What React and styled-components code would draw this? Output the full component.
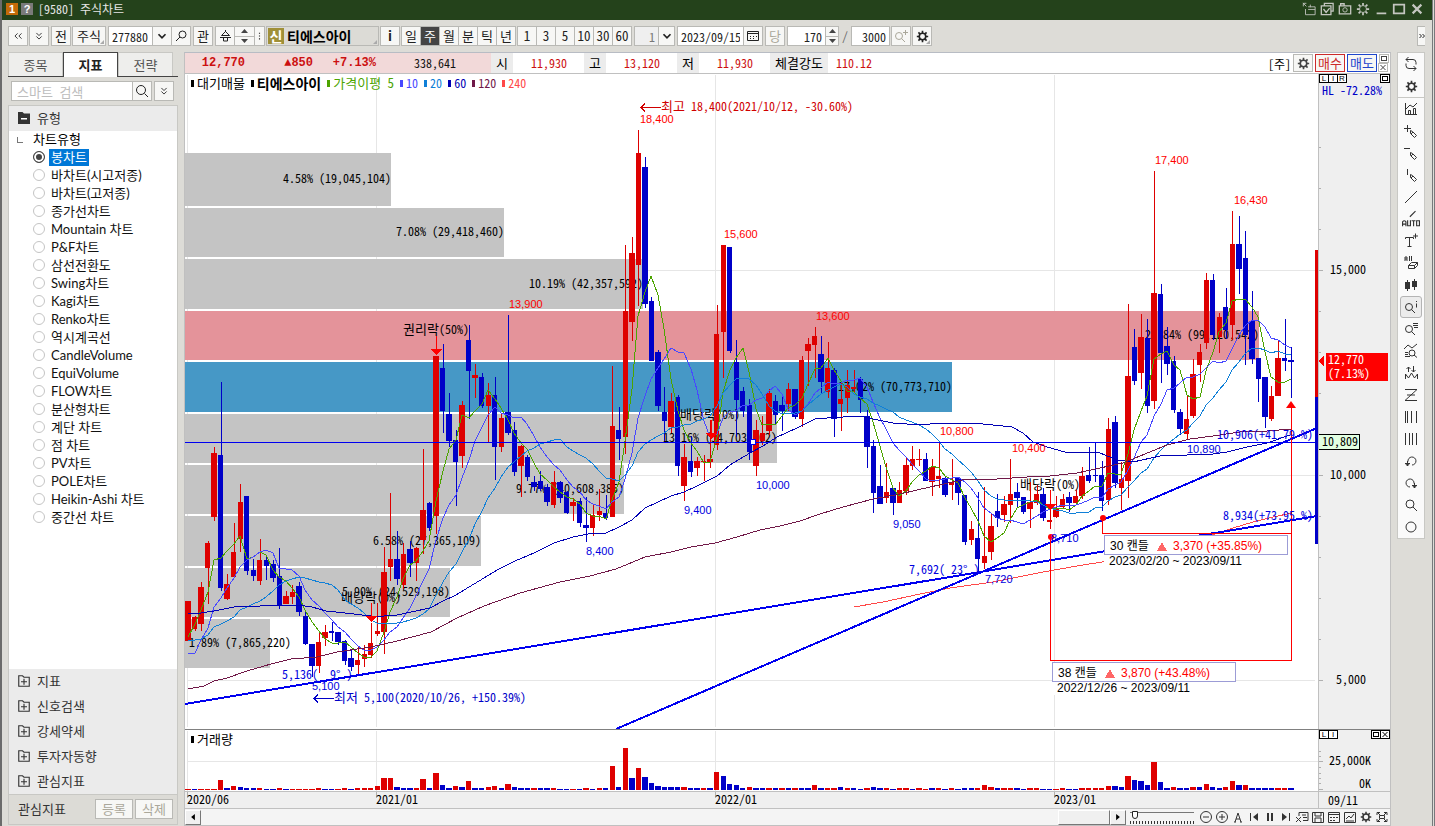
import React from "react";
import styled, { createGlobalStyle } from "styled-components";

const NARROW = '"Noto Sans Mono CJK KR", "Liberation Sans Narrow", "Noto Sans CJK KR", sans-serif';
const UI = '"Liberation Sans", "Noto Sans CJK KR", sans-serif';
const TREE = 'Lato, "Noto Sans CJK KR", sans-serif';

const Global = createGlobalStyle`
  * { box-sizing: border-box; }
  body { margin: 0; background: #dddcd7; font: 12px/16px ${NARROW}; color: #000; }
  button, input, select { font: inherit; color: inherit; margin: 0; }
`;

/* ---------- window frame ---------- */
const Window = styled.div`
  min-height: 100vh;
  display: flex;
  flex-direction: column;
  border-left: 2px solid #6b6b6b;
  border-right: 3px double #77797c;
  overflow: hidden;
`;
const TitleBar = styled.header`
  height: 20px;
  background: #24421b;
  color: #e6e6e6;
  display: flex;
  align-items: center;
  gap: 3px;
  padding: 0 8px 2px 4px;
  flex: none;
`;
const TitleBadge = styled.span`
  width: 12px;
  height: 12px;
  background: ${(p) => p.$bg};
  color: #fff;
  font: bold 11px/12px "Liberation Sans", sans-serif;
  text-align: center;
`;
const TitleText = styled.h1`
  margin: 0 auto 0 2px;
  font: inherit;
  font-size: 12px;
  line-height: 18px;
`;
const TitleIcons = styled.div`
  display: flex;
  gap: 4px;
  color: #c4c6c0;
`;
const PlainButton = styled.button`
  border: 0;
  padding: 0;
  background: none;
  display: grid;
  place-items: center;
  color: inherit;
`;

/* ---------- toolbar ---------- */
const ToolBar = styled.div`
  height: 32px;
  flex: none;
  display: flex;
  align-items: center;
  gap: 2px;
  padding-left: 6px;
  background: #dddcd7;
`;
const Cluster = styled.div`
  display: flex;
  gap: 1px;
`;
const Joined = styled.div`
  display: flex;
  & > * + * { margin-left: -1px; }
`;
const ToolButton = styled.button`
  position: relative;
  width: ${(p) => p.$w || 20}px;
  height: 20px;
  padding: 0;
  display: flex;
  align-items: center;
  justify-content: center;
  white-space: nowrap;
  border: 1px solid #b9b9b5;
  background: ${(p) => (p.$on ? "#444" : "#f7f7f5")};
  color: ${(p) => (p.$on ? "#fff" : p.$dim ? "#aaa79a" : "#222")};
  font-weight: ${(p) => (p.$bold ? 700 : 400)};
  font-size: 13px;
`;
const Corner = styled.i`
  position: absolute;
  right: 1px;
  bottom: 1px;
  border: 2px solid;
  border-color: transparent #aaa #aaa transparent;
`;
const Field = styled.input`
  width: ${(p) => p.$w}px;
  height: 20px;
  padding: 0 3px;
  border: 1px solid #b9b9b5;
  border-radius: 0;
  background: ${(p) => (p.$dim ? "#efefef" : "#fff")};
  color: ${(p) => (p.$dim ? "#777" : "#222")};
  text-align: ${(p) => p.$align || "left"};
  outline: none;
`;
const Slash = styled.span`
  width: 8px;
  text-align: center;
  color: #666;
`;
const NameBox = styled.button`
  position: relative;
  width: 113px;
  height: 20px;
  padding: 0 1px;
  display: flex;
  align-items: center;
  gap: 3px;
  border: 1px solid #b9b9b5;
  background: #dcdbd6;
  font-weight: 700;
  font-size: 14px;
`;
const NewBadge = styled.span`
  width: 16px;
  height: 16px;
  line-height: 16px;
  background: #a09038;
  color: #fff;
`;
const Spin = styled.span`
  width: ${(p) => p.$w}px;
  height: 20px;
  display: flex;
  flex-direction: column;
`;
const SpinButton = styled.button`
  flex: 1;
  padding: 0;
  border: 1px solid #b9b9b5;
  background: #f7f7f5;
  color: #444;
  display: grid;
  place-items: center;
  min-height: 0;
  & + & { border-top: 0; }
`;
const Overflow = styled(ToolButton)`
  margin-left: auto;
  margin-right: 7px;
  border-right: 0;
`;

/* ---------- body ---------- */
const Body = styled.div`
  flex: 1;
  display: flex;
  align-items: stretch;
  padding: 0 7px 2px 6px;
  min-height: 0;
`;
const Sidebar = styled.aside`
  width: 170px;
  flex: none;
  display: flex;
  flex-direction: column;
  margin: 0 6px 1px 0;
`;
const Tabs = styled.div`
  display: flex;
  height: 25px;
  border-bottom: 1px solid #444;
`;
const Tab = styled.button`
  width: 55px;
  height: ${(p) => (p.$on ? 25 : 24)}px;
  padding: 0;
  font-size: 13px;
  font-weight: ${(p) => (p.$on ? 700 : 400)};
  color: ${(p) => (p.$on ? "#222" : "#555")};
  background: ${(p) => (p.$on ? "#fff" : "#eeeeec")};
  border: 1px solid ${(p) => (p.$on ? "#444" : "#c8c8c4")};
  border-bottom: 0;
`;
const SearchRow = styled.form`
  display: flex;
  gap: 2px;
  padding: 4px 3px;
`;
const SearchField = styled(Field)`
  color: #444;
  padding-left: 5px;
  font-size: 13px;
  &::placeholder { color: #bdbdbd; opacity: 1; }
`;
const TreePanel = styled.section`
  flex: 1;
  display: flex;
  flex-direction: column;
  background: #fff;
  border: 1px solid #c8c8c4;
  border-bottom: 0;
`;
const FolderRow = styled.button`
  height: 25px;
  flex: none;
  width: 100%;
  border: 0;
  padding: 0 0 1px 9px;
  display: flex;
  align-items: center;
  gap: 7px;
  background: #ebebeb;
  color: #333;
  font-size: 13px;
`;
const Tree = styled.fieldset`
  margin: 0;
  padding: 0 0 0 24px;
  border: 0;
  flex: 1;
  font: 13px/18px ${TREE};
`;
const TreeTitle = styled.div`
  display: flex;
  height: 17px;
  line-height: 17px;
  gap: 10px;
  margin-left: -16px;
  &::before {
    content: "";
    width: 5px;
    height: 5px;
    margin-top: 6px;
    border: 1px solid #777;
    border-width: 0 0 1px 1px;
  }
`;
const TreeItem = styled.label`
  display: flex;
  align-items: center;
  gap: 4px;
  height: 18px;
`;
const Radio = styled.input`
  appearance: none;
  width: 12px;
  height: 12px;
  border: 1px solid ${(p) => (p.defaultChecked ? "#444" : "#c4c4c4")};
  border-radius: 50%;
  background: #fff;
  box-shadow: inset 0 0 0 2px #fff;
  &:checked { background: #444; }
`;
const TreeText = styled.span`
  padding: 0 2px;
  height: 17px;
  line-height: 17px;
  background: ${(p) => (p.$on ? "#0078d7" : "none")};
  color: ${(p) => (p.$on ? "#fff" : "#111")};
`;
const SideFooter = styled.div`
  height: 31px;
  flex: none;
  display: flex;
  align-items: center;
  gap: 2px;
  padding: 0 4px 2px 9px;
  background: #dcdbd6;
  border: 1px solid #c8c8c4;
  color: #333;
  font-size: 13px;
  & > span { margin-right: auto; }
`;

/* ---------- chart panel ---------- */
const Panel = styled.main`
  flex: 1;
  min-width: 0;
  display: flex;
  flex-direction: column;
  border: 1px solid #c0c0c0;
  border-top-color: #b8bcc4;
  background: #fff;
`;
const QuoteBar = styled.div`
  height: 21px;
  flex: none;
  display: flex;
  align-items: stretch;
  line-height: 20px;
  border-bottom: 1px solid #c0c0c0;
`;
const Quote = styled.div`
  display: flex;
  background: #f2d9d9;
  padding-right: 35px;
`;
const QuoteCell = styled.span`
  width: ${(p) => p.$w}px;
  text-align: right;
  color: ${(p) => (p.$plain ? "#111" : "#cc1010")};
  font-weight: ${(p) => (p.$plain ? 400 : 700)};
  font-family: ${(p) => (p.$plain ? NARROW : `"Liberation Mono", ${NARROW}`)};
`;
const QuoteLabel = styled.span`
  width: ${(p) => p.$w || 22}px;
  text-align: center;
  background: #ececec;
  font-size: 13px;
`;
const QuoteValue = styled.span`
  width: ${(p) => p.$w || 71}px;
  padding-right: 17px;
  text-align: right;
  color: #cc1010;
`;
const QuoteActions = styled.div`
  margin-left: auto;
  display: flex;
  gap: 2px;
  padding: 1px;
`;
const ActionButton = styled.button`
  width: ${(p) => p.$w}px;
  height: 18px;
  padding: 0;
  display: grid;
  place-items: center;
  line-height: 14px;
  font-size: 13px;
  background: #f7f7f5;
  color: ${(p) => p.$c || "#444"};
  border: 1px solid ${(p) => p.$c || "#b9b9b5"};
`;
const TinyStack = styled.div`
  display: flex;
  flex-direction: column;
  color: #444;
`;
const TinyButton = styled.button`
  width: 10px;
  height: 9px;
  padding: 0;
  border: 1px solid ${(p) => (p.$dark ? "#000" : "#b9b9b5")};
  background: #fff;
  display: grid;
  place-items: center;
  font: 8px/7px ${UI};
  & + & { margin-left: ${(p) => (p.$dark ? -1 : 0)}px; }
`;
const PaneRow = styled.section`
  display: flex;
  flex: none;
  border-bottom: 1px solid ${(p) => p.$line || "#808080"};
`;
const Plot = styled.div`
  position: relative;
  flex: 1;
  min-width: 0;
  background: ${(p) => p.$bg || "#fff"};
`;
const Axis = styled.div`
  position: relative;
  width: 72px;
  flex: none;
  border-left: 1px solid #c0c0c0;
  background: #efefef;
`;
const Drawing = styled.svg`
  display: block;
  width: 100%;
  height: auto;
  overflow: ${(p) => (p.$open ? "visible" : "hidden")};
  font: 12px ${NARROW};
`;
const Legend = styled.div`
  position: absolute;
  left: 6px;
  top: 1px;
  display: flex;
  gap: 6px;
`;
const LegendItem = styled.span`
  display: flex;
  align-items: center;
  gap: 3px;
  color: ${(p) => p.$c || "#000"};
  font-weight: ${(p) => (p.$bold ? 700 : 400)};
  font-size: ${(p) => p.$size || 12}px;
  &::before {
    content: "";
    width: 3px;
    height: 7px;
    background: currentColor;
  }
`;
const PaneButtons = styled.div`
  position: absolute;
  top: 0;
  left: ${(p) => (p.$right ? "auto" : 0)};
  right: ${(p) => (p.$right ? 0 : "auto")};
  display: flex;
`;
const BottomBar = styled.div`
  height: 16px;
  flex: none;
  display: flex;
  align-items: center;
  background: #f4f4f4;
`;
const ScrollTrack = styled.div`
  flex: 1;
  display: flex;
  justify-content: space-between;
`;
const ScrollButton = styled.button`
  width: ${(p) => p.$w || 16}px;
  height: 15px;
  padding: 0;
  display: grid;
  place-items: center;
  background: #f0f0f0;
  border: 1px solid;
  border-color: #fff #777 #777 #fff;
`;
const ZoomSlider = styled.input`
  appearance: none;
  width: 64px;
  height: 14px;
  margin: 0 4px;
  background:
    linear-gradient(#777, #777) 0 2px / 100% 1px no-repeat,
    repeating-linear-gradient(90deg, #333 0 1px, transparent 1px 3px) 0 11px / 100% 3px no-repeat;
  &::-webkit-slider-thumb {
    appearance: none;
    width: 6px;
    height: 8px;
    margin-top: -5px;
    border: 1px solid #222;
    border-radius: 0 0 3px 3px;
    background: #fff;
  }
`;
const IconRow = styled.div`
  display: flex;
  color: #333;
  & > button { width: 16px; height: 16px; }
`;
const ToolRail = styled.nav`
  width: 28px;
  flex: none;
  align-self: flex-start;
  margin: 0 0 0 6px;
  display: flex;
  flex-direction: column;
  align-items: center;
  background: #fafafa;
  border: 1px solid #c8c8c4;
  color: #333;
`;
const RailButton = styled.button`
  width: 22px;
  height: 22px;
  padding: 0;
  display: grid;
  place-items: center;
  color: inherit;
  border: 1px solid ${(p) => (p.$on ? "#b4b4b4" : "transparent")};
  border-radius: 3px;
  background: ${(p) => (p.$on ? "#ececec" : "none")};
`;
const RailLine = styled.hr`
  width: 100%;
  margin: 0;
  border: 0;
  border-top: 1px solid #c8c8c4;
`;

/* ---------- icons ---------- */
const Svg = ({ d, fill, size = 16, w = 1, children }) => (
  <svg width={size} height={size} viewBox="0 0 16 16" fill="none" stroke="currentColor" strokeWidth={w} aria-hidden="true">
    {d && <path d={d} />}
    {fill && <path d={fill} fill="currentColor" stroke="none" />}
    {children}
  </svg>
);
const Gear = ({ size = 16, w = 2 }) => (
  <Svg size={size}>
    <circle cx="8" cy="8" r="4" strokeWidth={w} />
    <path strokeWidth="2" d="M8 1v3M8 12v3M1 8h3M12 8h3M3 3l2 2M11 11l2 2M13 3l-2 2M5 11l-2 2" />
  </Svg>
);
const BoxMark = () => (
  <svg width="6" height="5" viewBox="0 0 6 5" fill="none" stroke="currentColor" shapeRendering="crispEdges" aria-hidden="true">
    <path d="M.5.5h5v4h-5z" />
  </svg>
);
const CrossMark = () => (
  <svg width="6" height="5" viewBox="0 0 6 5" fill="none" stroke="currentColor" aria-hidden="true">
    <path d="M.5 0l5 5M5.500 0l-5 5" />
  </svg>
);
const glyph = {
  up: <svg width="7" height="4" aria-hidden="true"><path d="M0 4L3.500 0 7 4z" fill="currentColor" /></svg>,
  down: <svg width="7" height="4" aria-hidden="true"><path d="M0 0l3.500 4L7 0z" fill="currentColor" /></svg>,
  chevron: <Svg size={14} w={2} d="M4 6l4 4 4-4" />,
  left2: <Svg size={14} d="M7.500 5l-3 3 3 3M12 5L9 8l3 3" />,
  right2: <svg width="6" height="6" viewBox="0 0 6 6" fill="none" stroke="currentColor" aria-hidden="true"><path d="M.5 1l2 2-2 2M3.500 1l2 2-2 2" /></svg>,
  down2: <Svg size={14} d="M5 4.500l3 3 3-3M5 8.500l3 3 3-3" />,
  pin: <Svg><circle cx="9.500" cy="6.500" r="3.500" /><path d="M7 9l-4 4" /></Svg>,
  lens: <Svg><circle cx="7" cy="7" r="4.500" /><path d="M10.500 10.500L14 14" /></Svg>,
  lensPlus: <Svg><circle cx="6" cy="8" r="3.500" /><path d="M8.500 10.500L12 14M10 4.500h5M12.500 2v5" /></Svg>,
  merge: <Svg d="M8.500 2v2M8.500 3.500l-4 4h8zM3 9.500h11M6.500 10v3h4v-3" />,
  dots: <Svg fill="M7 2h2v2H7zM7 7h2v2H7zM7 12h2v2H7z" />,
  calendar: <Svg d="M2.500 3.500h11v9h-11zM2.500 5.500h11M5 8.500h1M8 8.500h1M11 8.500h1M5 10.500h1M8 10.500h1" />,
};
const TITLE_ICONS = [
  ["새 창", <Svg size={14} d="M1 1l4 4M1.500 5V1.500H5M4 8v6.500h11v-9H7M7 8.500h8M9.500 3v3" />],
  ["저장", <Svg size={14} d="M5 4V1.500h10v9h-2M1.500 4.500h11v10h-11zM4 8l3 4 4-5" w={1.500} />],
  ["캡처", <Svg size={14}><path d="M1.500 4.500h13v9h-13zM3 4V2h4v2" strokeWidth="1.500" /><circle cx="8" cy="9" r="2.500" /></Svg>],
  ["설정", <Gear size={14} w={1} />],
];
const RAIL = [
  ["새로고침", <Svg d="M5.500 1L3 3.500 5.500 6M3 3.500h7q3 0 3 3v2M10.500 15l2.500-2.500L10.500 10M13 12.500H6q-3 0-3-3v-2" />],
  ["설정", <Gear size={13} w={2} />],
  ["지표", <Svg d="M2.500 2v11.500H14M5.500 13V9.500h2V13M10.500 13V7.500h2V13M3 8l4-4 3 2 4-4" />],
  ["십자선", <Svg d="M1 5.500h7M4.500 2v7M7.500 7.500v3l4 4 2-2-4-4zM8 11l2-2" />],
  ["수평선", <Svg d="M1 3.500h6M7.500 7.500v3l4 4 2-2-4-4zM8 11l2-2" />],
  ["수직선", <Svg d="M4.500 2v6M7.500 7.500v3l4 4 2-2-4-4zM8 11l2-2" />],
  ["추세선", <Svg d="M2 14L14 2" />],
  ["자동추세선", <Svg size={18} d="M7 6l5-5M.5 14.500v-4q1.500-2 3 0v4M.5 12.500h3M5 9v5h2.500V9M8.500 9.500h3.500M10.300 9.500v5M13 9.500h2.500v4.500H13z" />],
  ["문자", <Svg d="M2.500 6V4.500h8V6M6.500 5v8M4.500 13.500h4M10 3h5M12.500.5v5" />],
  ["전체삭제", <Svg d="M2 6V2h2v4M2 4h2M6.500 1v5M8.500 1v5M5.500 10.500h6v3h-6zM5.500 10.500l3-3h6l-3 3M14.500 7.500v3l-3 3" />],
  ["봉", <Svg fill="M2 5h5v7H2zM9 4h5v6H9zM4 3h1v11H4zM11 2h1v11h-1z" />],
  ["정보", <Svg><circle cx="6" cy="8" r="3.500" /><path d="M8.500 10.500L12 14M13.500 4.500v4M13.500 2v1" /></Svg>],
  ["목록", <Svg><circle cx="6" cy="8" r="3.500" /><path d="M8.500 10.500L12 14M10 2.500h5M10 4.500h5M11 6.500h4" /></Svg>],
  ["차트조회", <Svg><circle cx="9" cy="10" r="3" /><path d="M11 12l3 2.500M1 6l4-4 4 3 5-4M2 9.500h3M2 11.500h3M2 13.500h5" /></Svg>],
  ["매매신호", <Svg d="M2.500 14V9l3 4 3-5 3 5 3-4v5M5.500 7V2M3.500 4l2-2 2 2M10.500 1v6M8.500 5l2 2 2-2" />],
  ["지그재그", <Svg d="M2 2.500h12L2 13.500h12M4 8h8" />],
  ["간격선", <Svg d="M2.500 2v12M4.500 2v12M8.500 2v12M13.500 2v12" />],
  ["등분선", <Svg d="M2.500 2v12M6.500 2v12M9.500 2v12M13.500 2v12" />],
  ["되돌리기", <Svg d="M5 8.500a4 4 0 1 1 4 3.500M2 10.500h5M4.500 8v5M2.500 10.500l2 2.500 2-2.500" />],
  ["다시실행", <Svg d="M11 8.500a4 4 0 1 0-4 3.500M9 10.500h5M11.500 8v5M9.500 10.500l2 2.500 2-2.500" />],
  ["확대", <Svg><circle cx="7" cy="7" r="4" /><path d="M10 10l4 4" /></Svg>],
  ["원", <Svg><circle cx="8" cy="8" r="5" /></Svg>],
];
const BOTTOM_ICONS = [
  ["축소", <Svg><circle cx="8" cy="8" r="5.500" /><path d="M5 8h6" /></Svg>],
  ["확대", <Svg><circle cx="8" cy="8" r="5.500" /><path d="M5 8h6M8 5v6" /></Svg>],
  ["자동", <Svg d="M5 13L8 4l3 9M4 13h2M10 13h2M6 10h4" />],
  ["처음", <Svg d="M4.500 4v8" fill="M12 4v8L7 8z" />],
  ["정지", <Svg fill="M5 4h2v8H5zM9 4h2v8H9z" />],
  ["끝", <Svg d="M11.500 4v8" fill="M4 4v8l5-4z" />],
  ["엑셀", <Svg d="M5 7V3.500h9v8H9M8 6h4M9 8.500h4M2 8l5 5M7 8l-5 5" />],
  ["저장", <Svg d="M2.500 3.500h11v10h-11zM5 4v3h6V4M5 13v-4h6v4" />],
  ["표", <Svg d="M2.500 3.500h11v10h-11zM2.500 5.500h11M4 8.500h2M7 8.500h2M10 8.500h2M4 11.500h2M7 11.500h2" />],
  ["차트", <Svg d="M2.500 3.500h11v10h-11zM4 10l3-3 2 2 3-4M4 12h8" />],
  ["설정", <Gear size={12} />],
  ["전체화면", <Svg d="M3 6V3.500h3M10 3.500h3V6M13 10v2.500h-3M6 12.500H3V10M5.500 6.500h5v3h-5zM3 3l3 3M13 3l-3 3M3 13l3-3M13 13l-3-3" />],
];

/* ---------- chart data: [direction, high, body top, body bottom, low] in plot units ---------- */
const CANDLES = `R601,601,641,641 R616,617,629,631 R582,587,624,631 R541,543,568,604 R447,453,517,521 B382,455,588,591 R574,584,599,600 R523,552,577,577 R484,502,539,552 B496,496,571,575
B559,570,576,581 R539,560,581,585 B555,560,566,580 B560,564,578,582 B548,576,606,609 R591,596,604,604 R585,592,597,604 B582,586,612,616 B610,616,644,645 B644,644,666,677
R633,642,666,673 R625,632,638,646 B622,631,633,641 B632,632,642,645 B640,641,661,665 B649,658,667,671 R647,660,665,675 R645,654,659,667 R623,643,655,658 R603,631,634,636
R547,572,632,654 R493,559,567,581 B531,559,579,585 R543,554,585,589 B541,549,563,577 R547,548,563,581 R449,510,540,554 B502,503,528,531 R356,356,516,534 B344,368,411,433
B393,414,441,447 B430,440,462,506 R401,405,456,468 B325,340,371,419 R364,375,378,398 B373,377,406,408 R383,395,406,442 B377,395,447,480 R413,418,447,452 B315,412,433,435
B422,430,472,476 R445,446,466,497 B455,457,477,481 B476,482,487,491 B471,481,489,491 B484,487,502,506 R471,482,505,508 B481,482,498,503 B491,492,513,514 R498,502,506,521
B498,501,523,527 B497,525,528,542 R505,515,528,536 R489,511,515,521 B495,513,518,520 R366,426,517,517 B407,430,439,460 R245,311,437,454 R237,253,322,341 R130,153,265,306
B157,167,304,308 B297,301,361,361 B350,352,406,411 B387,412,421,441 R393,401,427,433 B395,397,466,476 R444,457,486,501 B436,461,472,477 R457,461,468,476 R455,461,462,481
R420,459,462,468 R305,334,445,450 R245,245,332,378 B247,247,351,353 B340,362,400,437 B387,391,411,417 B399,405,452,460 R420,430,466,476 R416,433,441,445 R389,393,431,435
B395,401,415,424 B395,405,411,431 R383,389,404,411 B389,389,417,419 R356,360,419,427 R338,344,351,386 R327,336,345,378 B336,354,382,393 R342,368,392,398 B368,370,419,437
R382,399,404,431 R370,385,398,413 R370,387,389,393 B377,379,400,413 B410,416,447,468 B440,446,493,513 B465,486,504,504 R463,492,498,503 B488,488,503,515 R482,490,503,503
R457,465,491,495 R446,459,466,470 R449,459,460,466 B453,459,481,481 R459,467,482,496 R443,476,479,488 B476,478,495,497 R459,482,485,500 B477,478,493,505 B495,495,542,545
R521,529,540,545 B492,538,559,571 R487,556,563,569 R513,526,552,560 B494,511,518,527 R496,504,515,522 R459,494,505,523 B483,492,498,508 B497,497,512,514 R482,502,509,528
R485,494,503,505 B488,494,518,521 R490,520,522,529 R496,508,517,518 R494,499,507,508 B492,497,503,512 R490,496,503,503 R467,476,496,499 B447,475,481,483 B443,475,476,482
B461,475,501,511 R418,429,500,505 B416,422,483,488 R462,479,488,510 R304,376,481,498 B329,347,381,385 R314,337,373,389 B319,338,406,413 R171,293,401,409 B284,294,353,383
B327,346,364,375 B356,361,410,413 B409,412,429,435 R395,419,434,440 R359,374,416,418 R344,352,365,382 R273,280,343,349 B274,280,335,340 R313,317,337,353 B288,307,330,339
R211,244,325,340 B216,244,269,294 B231,258,335,365 B291,321,359,364 B358,358,379,402 B377,377,417,428 R386,396,419,421 R341,358,396,396 B319,358,361,371 B347,360,362,398`
  .split(/\s+/)
  .map((s) => [s[0], ...s.slice(1).split(",").map(Number)]);

/* volume bar heights: positive is drawn red, negative blue */
const VOLUMES = [
  1, -1, 1, 1, 1, 10, -2, 4, -3, -2, -2, 2, -1, -1, 2, -1, 1, 1, 1, 1, 2, -1, -1, 1, 2, -1, 2, 2, 2, 4, 12, 12, -3, -2, -2, 2, 11, -2,
  17, -5, -2, 4, -3, 9, -2, -2, 3, 4, -2, 6, -3, -2, -2, 2, -2, -2, 2, -1, -1, 1, -1, 2, -1, 2, -2, 24, -3, 42, -12, 22, -13, -7, -4,
  -3, -3, -3, 3, -2, -2, 2, -2, 18, -14, -6, -5, -2, 3, -2, -2, 2, -2, 2, -2, 2, -2, -2, 5, -2, 2, 2, -3, 2, -2, -1, 2, -3, -2, 2, -1,
  2, 2, -1, 2, 1, -2, 2, -1, 2, -1, -2, -2, 2, 5, 3, -2, 2, 2, -2, -1, 2, 2, -1, -1, 1, 2, -1, -1, 2, 2, 2, 2, 4, -4, -3, 14, -10, -9,
  -5, 28, -8, -2, 3, -2, -2, 3, -3, 6, -3, -2, 3, 9, -5, 5, -2, -2, -2, -2, 2, 2, -2,
];
const STEP = 6.527;
const xAt = (i) => 188 + i * STEP;
const left = (i) => Math.round(xAt(i) - 2.7);
const right = (i) => Math.round(xAt(i) + 2.7);

const CLOSES = CANDLES.map((c) => (c[0] === "R" ? c[2] : c[3]));
const average = (n, seed) =>
  CLOSES.map((_, i) => {
    const y = i < n - 1 ? seed[i] : CLOSES.slice(i - n + 1, i + 1).reduce((a, b) => a + b, 0) / n;
    return `${Math.round(xAt(i))},${Math.round(y)}`;
  }).join(" ");

const MA5 = average(5, [637, 624, 610, 592]);
const MA10 = average(10, [653, 653, 640, 628, 607, 598, 588, 578, 567]);
const MA20 = average(20, [640, 640, 639, 635, 627, 624, 621, 617, 610, 607, 604, 601, 597, 591, 585, 581, 579, 577, 578]);
const MA60 =
  "188,613 201,613 214,611 234,607 241,606 260,606 266,605 297,605 312,607 326,611 345,613 371,616 384,616 397,615 411,612 430,608 443,601 456,595 469,587 484,578 499,569 515,561 534,553 554,543 573,537 593,533 606,533 619,527 632,520 645,508 658,502 671,496 684,492 697,486 717,476 730,465 750,453 763,446 777,437 797,428 815,419 827,418 860,416 873,419 893,423 920,425 940,423 973,423 993,425 1012,427 1023,433 1033,442 1047,447 1065,452 1100,453 1117,460 1133,462 1160,456 1187,455 1213,454 1227,452 1247,447 1267,443 1290,435";
const MA120 =
  "188,689 204,686 214,681 227,678 247,671 271,664 291,659 317,657 337,652 371,647 397,641 431,632 457,618 484,606 520,593 560,582 590,576 616,569 645,557 671,552 691,547 715,543 737,537 760,530 780,526 800,521 820,514 843,507 873,499 900,494 930,487 953,482 967,479 997,479 1027,477 1050,476 1077,473 1100,468 1123,463 1140,456 1167,445 1190,439 1213,436 1240,432 1267,431 1291,429";
const MA240 =
  "854,607 883,602 920,594 950,588 993,582 1013,578 1043,572 1060,569 1083,565 1109,561 1212,535 1233,528 1253,522 1273,517 1292,513";

const PROFILE = [
  [153, 53, 391, "#c4c4c4", "4.58% (19,045,104)"],
  [208, 49, 504, "#c4c4c4", "7.08% (29,418,460)"],
  [259, 50, 643, "#c4c4c4", "10.19% (42,357,592)"],
  [311, 49, 1259, "#e4939a", "23.84% (99,120,542)"],
  [362, 50, 952, "#4698c6", "17.02% (70,773,710)"],
  [414, 49, 777, "#c4c4c4", "13.16% (54,703,602)"],
  [465, 49, 624, "#c4c4c4", "9.77% (40,608,385)"],
  [516, 50, 481, "#c4c4c4", "6.58% (27,365,109)"],
  [568, 49, 450, "#c4c4c4", "5.90% (24,529,198)"],
  [619, 49, 270, "#c4c4c4", "1.89% (7,865,220)"],
];
const PEAKS = [
  [640, 123, "18,400"], [724, 238, "15,600"], [509, 308, "13,900"], [816, 320, "13,600"],
  [940, 435, "10,800"], [1012, 452, "10,400"], [1155, 164, "17,400"], [1234, 204, "16,430"],
];
const LOWS = [
  [684, 514, "9,400"], [586, 555, "8,400"], [756, 489, "10,000"], [893, 528, "9,050"],
  [985, 583, "7,720"], [312, 690, "5,100"], [1051, 542, "8,710"], [1187, 453, "10,890"],
];
const EVENTS = [
  [403, 334, "권리락", "(50%)", 436, 355], [341, 602, "배당락", "(0%)", 371, 622],
  [680, 419, "배당락", "(0%)", 711, 439], [1020, 489, "배당락", "(0%)", 1050, 510],
];
const GRID_X = [187, 376, 715, 1054];
const DATES = ["2020/06", "2021/01", "2022/01", "2023/01"];
const CHART_TYPES = [
  "봉차트", "바차트(시고저종)", "바차트(고저종)", "종가선차트", "Mountain 차트", "P&F차트", "삼선전환도", "Swing차트", "Kagi차트",
  "Renko차트", "역시계곡선", "CandleVolume", "EquiVolume", "FLOW차트", "분산형차트", "계단 차트", "점 차트", "PV차트", "POLE차트",
  "Heikin-Ashi 차트", "중간선 차트",
];

const Arrow = ({ x, y, c }) => <path d={`M${x} ${y}h20M${x + 4} ${y - 4}l-4 4 4 4`} stroke={c} fill="none" />;
const Hangul = ({ children }) => <tspan fontSize="13">{children}</tspan>;

const Measure = ({ x, y, count, value, dates }) => (
  <g>
    <rect x={x} y={y + 19} width="145" height="14" fill="#fff" />
    <rect x={x + 0.5} y={y + 0.5} width="183" height="19" fill="#fff" stroke="#9c9cd6" />
    <g fontFamily={UI} fontSize="12">
      <text x={x + 6} y={y + 15}>{count}</text>
      <path d={`M${x + 53} ${y + 16}h10l-5-9z`} fill="#ff6666" />
      <text x={x + 69} y={y + 15} fill="#f00">{value}</text>
      <text x={x + 5} y={y + 30}>{dates}</text>
    </g>
  </g>
);

const PricePlot = () => (
  <Drawing viewBox="185 74 1133 655" role="img" aria-label="주가 차트" shapeRendering="crispEdges">
    <g stroke="#e6e6e6">
      {GRID_X.map((x) => <path key={x} d={`M${x + 0.5} 75V727`} />)}
      {[270, 475, 680].map((y) => <path key={y} d={`M187 ${y + 0.5}H1315`} />)}
    </g>
    {PROFILE.map(([y, h, x, c]) => <rect key={y} x="185" y={y} width={x - 185} height={h} fill={c} />)}
    {PROFILE.map(([y, h, x, , t]) => (
      <text key={y} x={Math.max(x, 291)} y={Math.floor(y + h / 2 + 4)} textAnchor="end">{t}</text>
    ))}
    {EVENTS.map(([x, y, name, rate]) => <text key={x} x={x} y={y}><Hangul>{name}</Hangul>{rate}</text>)}
    {CANDLES.map(([k, hi, top, bot, lo], i) => {
      const c = k === "R" ? "#de0000" : "#0000c8";
      return (
        <g key={i} fill={c}>
          <rect x={Math.round(xAt(i))} y={hi} width="1" height={lo - hi} />
          <rect x={left(i)} y={top} width={right(i) - left(i)} height={Math.max(1, bot - top)} />
        </g>
      );
    })}
    <g fill="none">
      <polyline points={MA5} stroke="#4ca400" />
      <polyline points={MA10} stroke="#4848ff" />
      <polyline points={MA20} stroke="#1080d8" />
      <polyline points={MA60} stroke="#0000b4" />
      <polyline points={MA120} stroke="#701848" />
      <polyline points={MA240} stroke="#ff4848" />
      <path d="M185 704L1317 516M616 729L1317 428" stroke="#0000f0" strokeWidth="2" />
      <path d="M185 442.500H1318" stroke="#0000f0" />
    </g>
    <rect x="750.500" y="439.500" width="5" height="5" fill="#fff" stroke="#0000f0" />
    {EVENTS.map(([x, , , , ax, ay]) => (
      <path key={x} d={`M${ax} ${ay - 19}h1v13h5l-5.500 6-5.500-6h5z`} fill="#f00" />
    ))}
    <g fill="none" stroke="#f00">
      <path d="M1102.500 518v15.500H1291.500M1050.500 536v124.500H1291.500V405" />
    </g>
    <g fill="#f00" shapeRendering="auto">
      <circle cx="1103" cy="518" r="3" />
      <circle cx="1051" cy="537" r="3" />
      <path d="M1286 408h10l-5-7z" />
    </g>
    <Arrow x={641} y={107.5} c="#d00000" />
    <text x="661" y="111" fill="#d00000"><Hangul>최고</Hangul> 18,400(2021/10/12, -30.60%)</text>
    <Arrow x={314} y={698.5} c="#0000c8" />
    <text x="334" y="702" fill="#0000c8"><Hangul>최저</Hangul> 5,100(2020/10/26, +150.39%)</text>
    <g fill="#0000e0">
      <text x="282" y="679">5,136(&nbsp; 9°&nbsp;)</text>
      <text x="909" y="574">7,692( 23°&nbsp;)</text>
      <text x="1217" y="439">10,906(+41.79 %)</text>
      <text x="1223" y="520">8,934(+73.95 %)</text>
    </g>
    <g fontFamily={UI} fontSize="11" fill="#f00">
      {PEAKS.map(([x, y, t]) => <text key={x} x={x} y={y}>{t}</text>)}
    </g>
    <g fontFamily={UI} fontSize="11" fill="#0000e0">
      {LOWS.map(([x, y, t]) => <text key={x} x={x} y={y}>{t}</text>)}
    </g>
    <Measure x={1104} y={535} count="30 캔들" value="3,370 (+35.85%)" dates="2023/02/20 ~ 2023/09/11" />
    <Measure x={1052} y={662} count="38 캔들" value="3,870 (+43.48%)" dates="2022/12/26 ~ 2023/09/11" />
    <rect x="1315" y="250" width="3" height="147" fill="#de0000" />
    <rect x="1315" y="397" width="3" height="147" fill="#0000c8" />
  </Drawing>
);

const PriceAxis = () => (
  <Drawing viewBox="1319 74 71 655" shapeRendering="crispEdges">
    {Array.from({ length: 14 }, (_, i) => 147 + i * 41).map((y) => (
      <path key={y} d={`M1319 ${y + 0.5}h${(y - 270) % 205 === 0 ? 4 : 2}`} stroke="#b0b0b0" />
    ))}
    <text x="1322" y="95" fill="#0000c8">HL -72.28%</text>
    <text x="1366" y="274" textAnchor="end">15,000</text>
    <text x="1366" y="479" textAnchor="end">10,000</text>
    <text x="1366" y="684" textAnchor="end">5,000</text>
    <path d="M1324 356v10l-6-5z" fill="#f00" />
    <rect x="1326" y="353" width="62" height="28" fill="#f00" />
    <text x="1328" y="364" fill="#fff">12,770</text>
    <text x="1328" y="378" fill="#fff">(7.13%)</text>
    <rect x="1318.500" y="434.500" width="41" height="15" fill="#e2ffe2" stroke="#000" />
    <text x="1322" y="446">10,809</text>
  </Drawing>
);

const VolumePlot = () => (
  <Drawing viewBox="185 730 1133 61" role="img" aria-label="거래량 차트" shapeRendering="crispEdges">
    <g stroke="#e6e6e6">
      {GRID_X.map((x) => <path key={x} d={`M${x + 0.5} 731V791`} />)}
      <path d="M187 761.500H1318" />
    </g>
    {VOLUMES.map((v, i) => (
      <rect
        key={i}
        x={left(i)}
        y={790 - Math.abs(v)}
        width={right(i) - left(i)}
        height={Math.abs(v)}
        fill={v > 0 ? "#de0000" : "#0000c8"}
      />
    ))}
  </Drawing>
);

const RAIL_SPLIT = 2;

export default function App() {
  return (
    <>
      <Global />
      <Window>
        <TitleBar>
          <TitleBadge $bg="#c46a08">1</TitleBadge>
          <TitleBadge $bg="#7a7a7a">?</TitleBadge>
          <TitleText>[9580] 주식차트</TitleText>
          <TitleIcons>
            {TITLE_ICONS.map(([n, icon]) => <PlainButton key={n} aria-label={n}>{icon}</PlainButton>)}
            <PlainButton aria-label="최소화"><Svg size={14} w={2} d="M3 13h11" /></PlainButton>
            <PlainButton aria-label="최대화"><Svg size={14} w={2} d="M2 3h12v10H2z" /></PlainButton>
            <PlainButton aria-label="닫기"><Svg size={14} w={2.500} d="M3 3l10 10M13 3L3 13" /></PlainButton>
          </TitleIcons>
        </TitleBar>

        <ToolBar>
          <Cluster>
            <ToolButton aria-label="이전">{glyph.left2}</ToolButton>
            <ToolButton aria-label="펼치기">{glyph.down2}</ToolButton>
          </Cluster>
          <Cluster>
            <ToolButton>전</ToolButton>
            <ToolButton $w={34}>주식<Corner /></ToolButton>
          </Cluster>
          <Joined>
            <Field $w={45} defaultValue="277880" aria-label="종목코드" />
            <ToolButton aria-label="종목 목록">{glyph.chevron}</ToolButton>
            <ToolButton aria-label="종목 검색">{glyph.pin}</ToolButton>
          </Joined>
          <ToolButton>관</ToolButton>
          <Cluster>
            <Joined>
              <ToolButton aria-label="순환">{glyph.merge}</ToolButton>
              <Spin $w={21}><SpinButton aria-label="위">{glyph.up}</SpinButton><SpinButton aria-label="아래">{glyph.down}</SpinButton></Spin>
              <ToolButton $w={11} aria-label="더보기">{glyph.dots}</ToolButton>
            </Joined>
            <NameBox><NewBadge>신</NewBadge>티에스아이<Corner /></NameBox>
            <ToolButton $bold>i</ToolButton>
            <Joined>
              {["일", "주", "월", "분", "틱", "년"].map((t) => <ToolButton key={t} $on={t === "주"}>{t}</ToolButton>)}
            </Joined>
            <Joined>
              {["1", "3", "5", "10", "30", "60"].map((t) => <ToolButton key={t}>{t}</ToolButton>)}
            </Joined>
          </Cluster>
          <Joined>
            <Field $w={25} $dim $align="right" defaultValue="1" aria-label="분 단위" />
            <ToolButton $w={17} aria-label="분 단위 목록">{glyph.chevron}</ToolButton>
          </Joined>
          <Joined>
            <Field $w={67} defaultValue="2023/09/15" aria-label="기준일" />
            <ToolButton aria-label="달력">{glyph.calendar}</ToolButton>
          </Joined>
          <ToolButton $dim>당</ToolButton>
          <Joined>
            <Field $w={39} $align="right" defaultValue="170" aria-label="봉 개수" />
            <Spin $w={14}><SpinButton aria-label="늘리기">{glyph.up}</SpinButton><SpinButton aria-label="줄이기">{glyph.down}</SpinButton></Spin>
          </Joined>
          <Slash>/</Slash>
          <Cluster>
            <Field $w={39} $align="right" defaultValue="3000" aria-label="전체 봉" />
            <ToolButton $dim aria-label="확대 조회">{glyph.lensPlus}</ToolButton>
            <ToolButton aria-label="차트 설정"><Gear size={13} /><Corner /></ToolButton>
          </Cluster>
          <Overflow $w={8} aria-label="더 보기">{glyph.right2}</Overflow>
        </ToolBar>

        <Body>
          <Sidebar>
            <Tabs role="tablist">
              {["종목", "지표", "전략"].map((t) => <Tab key={t} role="tab" $on={t === "지표"}>{t}</Tab>)}
            </Tabs>
            <SearchRow>
              <Joined>
                <SearchField $w={122} placeholder="스마트 검색" aria-label="스마트 검색" />
                <ToolButton type="button" aria-label="검색">{glyph.lens}</ToolButton>
              </Joined>
              <ToolButton type="button" aria-label="모두 펼치기">{glyph.down2}</ToolButton>
            </SearchRow>
            <TreePanel>
              <FolderRow>
                <Svg size={12} fill="M0 0h6l2 2h8v14H0z"><path d="M4 9h8" stroke="#fff" strokeWidth="2" /></Svg>유형
              </FolderRow>
              <Tree>
                <TreeTitle>차트유형</TreeTitle>
                {CHART_TYPES.map((t, i) => (
                  <TreeItem key={t}>
                    <Radio type="radio" name="chartType" defaultChecked={i === 0} />
                    <TreeText $on={i === 0}>{t}</TreeText>
                  </TreeItem>
                ))}
              </Tree>
              {["지표", "신호검색", "강세약세", "투자자동향", "관심지표"].map((t) => (
                <FolderRow key={t}>
                  <Svg size={12} w={1.500} d="M1 1h5l2 2h7v12H1zM4 9h8M8 5v8" />{t}
                </FolderRow>
              ))}
            </TreePanel>
            <SideFooter>
              <span>관심지표</span>
              <ToolButton $w={38} $dim>등록</ToolButton>
              <ToolButton $w={38} $dim>삭제</ToolButton>
            </SideFooter>
          </Sidebar>

          <Panel>
            <QuoteBar>
              <Quote>
                <QuoteCell $w={60}>12,770</QuoteCell>
                <QuoteCell $w={68}>▲850</QuoteCell>
                <QuoteCell $w={63}>+7.13%</QuoteCell>
                <QuoteCell $w={80} $plain>338,641</QuoteCell>
              </Quote>
              <QuoteLabel>시</QuoteLabel><QuoteValue>11,930</QuoteValue>
              <QuoteLabel>고</QuoteLabel><QuoteValue>13,120</QuoteValue>
              <QuoteLabel>저</QuoteLabel><QuoteValue>11,930</QuoteValue>
              <QuoteLabel $w={58}>체결강도</QuoteLabel><QuoteValue $w={61}>110.12</QuoteValue>
              <QuoteActions>
                <span>[주]</span>
                <ActionButton $w={20} aria-label="설정"><Gear size={13} /></ActionButton>
                <ActionButton $w={30} $c="#cc2a2a">매수</ActionButton>
                <ActionButton $w={30} $c="#1e46cc">매도</ActionButton>
                <TinyStack>
                  <TinyButton aria-label="최대화"><BoxMark /></TinyButton>
                  <TinyButton aria-label="닫기"><CrossMark /></TinyButton>
                </TinyStack>
              </QuoteActions>
            </QuoteBar>

            <PaneRow>
              <Plot>
                <PricePlot />
                <Legend>
                  <LegendItem $size={13}>대기매물</LegendItem>
                  <LegendItem $size={14} $bold>티에스아이</LegendItem>
                  <LegendItem $size={13} $c="#4ca400">가격이평 5</LegendItem>
                  <LegendItem $c="#4848ff">10</LegendItem>
                  <LegendItem $c="#1080d8">20</LegendItem>
                  <LegendItem $c="#0000b4">60</LegendItem>
                  <LegendItem $c="#701848">120</LegendItem>
                  <LegendItem $c="#ff4848">240</LegendItem>
                </Legend>
              </Plot>
              <Axis>
                <PriceAxis />
                <PaneButtons>{["L", "I", "R"].map((t) => <TinyButton key={t} $dark>{t}</TinyButton>)}</PaneButtons>
                <PaneButtons $right><TinyButton $dark aria-label="최대화"><BoxMark /></TinyButton></PaneButtons>
              </Axis>
            </PaneRow>

            <PaneRow $line="#c0c0c0">
              <Plot>
                <VolumePlot />
                <Legend><LegendItem $size={13}>거래량</LegendItem></Legend>
              </Plot>
              <Axis>
                <Drawing viewBox="1319 730 71 61" shapeRendering="crispEdges">
                  {[751, 756, 761, 767, 773, 778, 783, 789].map((y) => (
                    <path key={y} d={`M1319 ${y + 0.5}h${y === 761 || y === 789 ? 4 : 2}`} stroke="#b0b0b0" />
                  ))}
                  <text x="1371" y="765" textAnchor="end">25,000K</text>
                  <text x="1371" y="788" textAnchor="end">0K</text>
                </Drawing>
                <PaneButtons>{["L", "I"].map((t) => <TinyButton key={t} $dark>{t}</TinyButton>)}</PaneButtons>
                <PaneButtons $right>
                  <TinyButton $dark aria-label="최대화"><BoxMark /></TinyButton>
                  <TinyButton $dark aria-label="닫기"><CrossMark /></TinyButton>
                </PaneButtons>
              </Axis>
            </PaneRow>

            <PaneRow $line="#c0c0c0">
              <Plot $bg="#efefef">
                <Drawing viewBox="185 792 1133 16" $open>
                  {GRID_X.map((x, i) => (
                    <g key={x}>
                      <path d={`M${x + 0.5} 792v6`} stroke="#b0b0b0" />
                      <text x={x} y="804">{DATES[i]}</text>
                    </g>
                  ))}
                </Drawing>
              </Plot>
              <Axis>
                <Drawing viewBox="1319 792 71 16" $open><text x="1328" y="805">09/11</text></Drawing>
              </Axis>
            </PaneRow>

            <BottomBar>
              <ScrollTrack>
                <ScrollButton aria-label="왼쪽으로"><Svg size={10} fill="M11 3v10L5 8z" /></ScrollButton>
                <ScrollButton $w={52} aria-label="스크롤 막대" />
              </ScrollTrack>
              <ScrollButton aria-label="오른쪽으로"><Svg size={10} fill="M5 3v10l6-5z" /></ScrollButton>
              <ZoomSlider type="range" min="0" max="100" defaultValue="3" aria-label="확대 비율" />
              <IconRow>
                {BOTTOM_ICONS.map(([n, icon]) => <PlainButton key={n} aria-label={n}>{icon}</PlainButton>)}
              </IconRow>
            </BottomBar>
          </Panel>

          <ToolRail>
            {RAIL.slice(0, RAIL_SPLIT).map(([n, icon]) => <RailButton key={n} aria-label={n}>{icon}</RailButton>)}
            <RailLine />
            {RAIL.slice(RAIL_SPLIT).map(([n, icon]) => <RailButton key={n} aria-label={n} $on={n === "정보"}>{icon}</RailButton>)}
          </ToolRail>
        </Body>
      </Window>
    </>
  );
}
